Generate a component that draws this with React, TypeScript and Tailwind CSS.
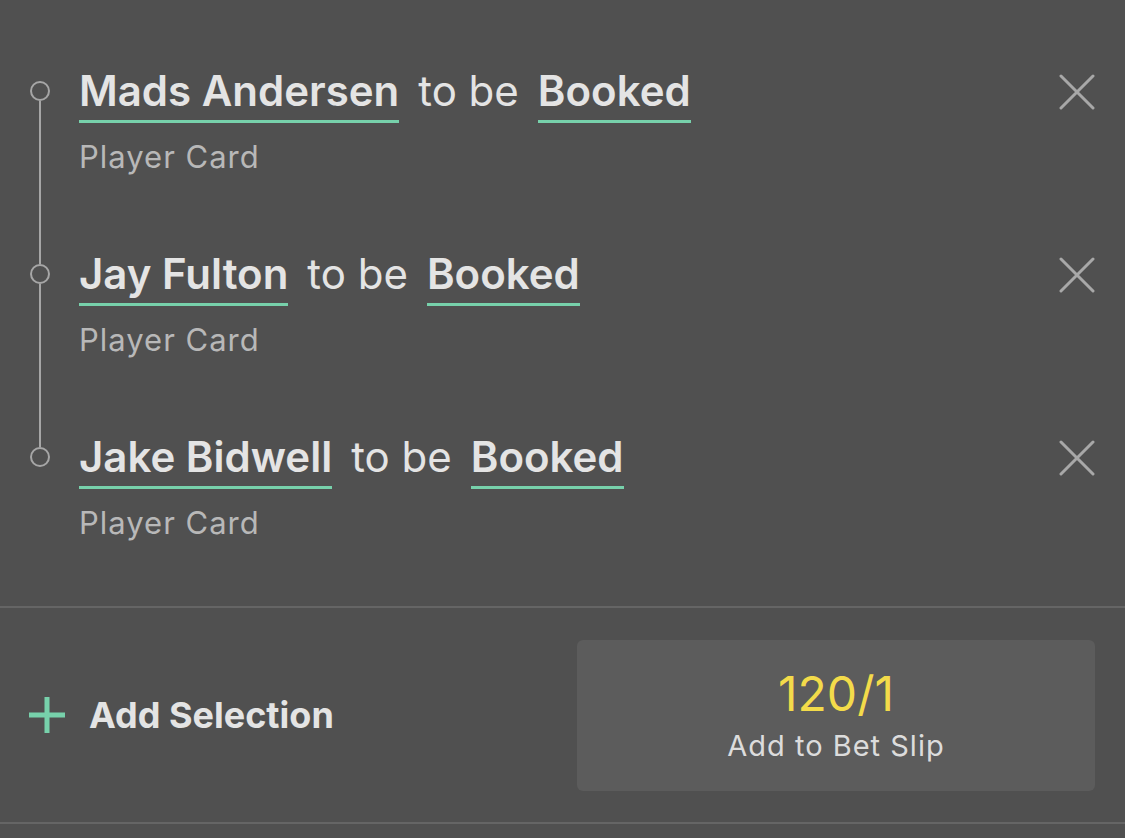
import React from "react";

type Leg = { player: string };

const legs: Leg[] = [
  { player: "Mads Andersen" },
  { player: "Jay Fulton" },
  { player: "Jake Bidwell" },
];

function CloseIcon() {
  return (
    <svg width="36" height="36" viewBox="0 0 36 36" fill="none">
      <path d="M2 2L34 34M34 2L2 34" stroke="#a8a8a8" strokeWidth="3" strokeLinecap="round" />
    </svg>
  );
}

function PlusIcon() {
  return (
    <svg width="38" height="38" viewBox="0 0 38 38" fill="none">
      <path d="M19 1V37M1 19H37" stroke="#77d1ab" strokeWidth="5" />
    </svg>
  );
}

function LegRow({ leg, first, last }: { leg: Leg; first: boolean; last: boolean }) {
  return (
    <div className="flex h-[183px] items-start">
      <div className="ml-[30px] mr-[29px] flex h-full w-5 flex-col items-center">
        <div className={`h-[81px] w-[2px] ${first ? "bg-transparent" : "bg-[#a6a6a6]"}`} />
        <div className="h-5 w-5 shrink-0 rounded-full border-2 border-[#a6a6a6]" />
        <div className={`w-[2px] flex-1 ${last ? "bg-transparent" : "bg-[#a6a6a6]"}`} />
      </div>
      <div className="flex-1 pt-[67px]">
        <div className="flex items-start text-[42px] leading-[48px] text-[#e4e4e4]">
          <span className="border-b-[3px] border-[#77d1ab] pb-[5px] font-semibold">{leg.player}</span>
          <span className="mx-[19px]">to be</span>
          <span className="border-b-[3px] border-[#77d1ab] pb-[5px] font-semibold">Booked</span>
        </div>
        <div className="mt-[16px] text-[31px] leading-[36px] tracking-[1px] text-[#b8b8b8]">Player Card</div>
      </div>
      <button className="mr-[30px] mt-[74px]">
        <CloseIcon />
      </button>
    </div>
  );
}

export default function App() {
  return (
    <div
      className="flex h-[838px] w-[1125px] flex-col bg-[#505050]"
      style={{ fontFamily: "Inter, 'Noto Sans', sans-serif" }}
    >
      <div className="pb-[57px]">
        {legs.map((leg, i) => (
          <LegRow key={leg.player} leg={leg} first={i === 0} last={i === legs.length - 1} />
        ))}
      </div>
      <div className="h-[2px] bg-[#656565]" />
      <div className="flex h-[214px] items-center justify-between pl-[28px] pr-[30px]">
        <button className="flex items-center gap-[23px]">
          <PlusIcon />
          <span className="text-[36px] font-bold text-[#e4e4e4]">Add Selection</span>
        </button>
        <button className="flex h-[151px] w-[518px] flex-col items-center justify-center rounded-[6px] bg-[#5c5c5c]">
          <span className="text-[48px] leading-[54px] text-[#f3db4a]">120/1</span>
          <span className="mt-[8px] text-[29px] leading-[34px] tracking-[1px] text-[#dcdcdc]">Add to Bet Slip</span>
        </button>
      </div>
      <div className="h-[2px] bg-[#656565]" />
    </div>
  );
}
